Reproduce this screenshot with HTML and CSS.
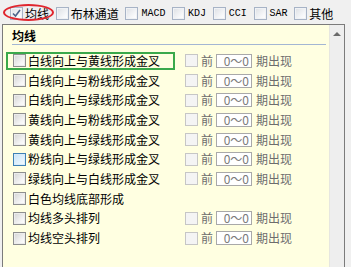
FILE: index.html
```html
<!DOCTYPE html>
<html>
<head>
    <meta charset="UTF-8">
    <title>均线</title>
    <link rel="stylesheet" href="styles.css">
</head>
<body>
    <!-- top toolbar -->
    <div class="toolbar">
        <span class="tab">
            <span class="cb cb-tool checked">
                <svg width="11" height="11" viewBox="0 0 11 11"><polyline points="2,5.5 4.5,8 9,2" fill="none" stroke="#4b6289" stroke-width="1.6"/></svg>
            </span>均线
        </span>
        <span class="tab"><span class="cb cb-tool"></span>布林通道</span>
        <span class="tab"><span class="cb cb-tool"></span><span class="latin">MACD</span></span>
        <span class="tab"><span class="cb cb-tool"></span><span class="latin">KDJ</span></span>
        <span class="tab"><span class="cb cb-tool"></span><span class="latin">CCI</span></span>
        <span class="tab"><span class="cb cb-tool"></span><span class="latin">SAR</span></span>
        <span class="tab"><span class="cb cb-tool"></span>其他</span>
        <span class="circle-mark"></span>
    </div>

    <div class="panel">
        <div class="pane">
            <div class="heading">均线</div>

            <div class="row first">
                <label class="opt marked"><span class="cb"></span>白线向上与黄线形成金叉</label>
                <div class="more"><span class="cb off"></span><span class="pre">前</span><span class="range">0～0</span><span class="post">期出现</span></div>
            </div>
            <div class="row">
                <label class="opt"><span class="cb"></span>白线向上与粉线形成金叉</label>
                <div class="more"><span class="cb off"></span><span class="pre">前</span><span class="range">0～0</span><span class="post">期出现</span></div>
            </div>
            <div class="row">
                <label class="opt"><span class="cb"></span>白线向上与绿线形成金叉</label>
                <div class="more"><span class="cb off"></span><span class="pre">前</span><span class="range">0～0</span><span class="post">期出现</span></div>
            </div>
            <div class="row">
                <label class="opt"><span class="cb"></span>黄线向上与粉线形成金叉</label>
                <div class="more"><span class="cb off"></span><span class="pre">前</span><span class="range">0～0</span><span class="post">期出现</span></div>
            </div>
            <div class="row">
                <label class="opt"><span class="cb"></span>黄线向上与绿线形成金叉</label>
                <div class="more"><span class="cb off"></span><span class="pre">前</span><span class="range">0～0</span><span class="post">期出现</span></div>
            </div>
            <div class="row">
                <label class="opt"><span class="cb hover"></span>粉线向上与绿线形成金叉</label>
                <div class="more"><span class="cb off"></span><span class="pre">前</span><span class="range">0～0</span><span class="post">期出现</span></div>
            </div>
            <div class="row">
                <label class="opt"><span class="cb"></span>绿线向上与白线形成金叉</label>
                <div class="more"><span class="cb off"></span><span class="pre">前</span><span class="range">0～0</span><span class="post">期出现</span></div>
            </div>
            <div class="row">
                <label class="opt"><span class="cb"></span>白色均线底部形成</label>
            </div>
            <div class="row">
                <label class="opt"><span class="cb"></span>均线多头排列</label>
                <div class="more"><span class="cb off"></span><span class="pre">前</span><span class="range">0～0</span><span class="post">期出现</span></div>
            </div>
            <div class="row">
                <label class="opt"><span class="cb"></span>均线空头排列</label>
                <div class="more"><span class="cb off"></span><span class="pre">前</span><span class="range">0～0</span><span class="post">期出现</span></div>
            </div>
        </div>
        <!-- vertical scrollbar -->
        <div class="scrollbar"><span class="arrow-up"></span></div>
    </div>
</body>
</html>
```

FILE: styles.css
```css
body {
    margin: 0;
    height: 267px;
    overflow: hidden;
    background-color: #f0f0f0;
    font-family: "Noto Sans CJK SC", sans-serif;
    font-size: 12px;
    color: #000;
}

/* toolbar */
.toolbar {
    position: relative;
    display: flex;
    align-items: center;
    box-sizing: border-box;
    height: 24px;
    padding: 3px 0 0 10px;
}

.tab {
    display: flex;
    align-items: center;
    gap: 2px;
    margin-right: 6.7px;
    line-height: 14px;
}

.latin {
    font-family: "Liberation Mono", monospace;
    font-size: 10px;
    padding-left: 1px;
}

/* red hand-drawn ring around the first tab */
.circle-mark {
    position: absolute;
    left: 3px;
    top: 4px;
    width: 51px;
    height: 17px;
    box-sizing: border-box;
    border: 2px solid #e0262e;
    border-radius: 50%;
}

/* checkboxes */
.cb {
    display: inline-flex;
    align-items: center;
    justify-content: center;
    flex: none;
    box-sizing: border-box;
    width: 13px;
    height: 13px;
    border: 1px solid #8d8e8e;
    background: linear-gradient(135deg, #d4d4d4, #f6f6f6 70%, #ffffff);
    box-shadow: inset 0 0 0 1px #ececec;
}

.cb-tool {
    border-color: #a7b3c6;
    background: linear-gradient(135deg, #dcdfe4, #f7f8fa 70%, #ffffff);
    box-shadow: inset 0 0 0 1px #f0f2f5;
}

.cb.hover {
    border-color: #3d80b4;
    background: linear-gradient(135deg, #c6e2f7, #e6f4fd 70%, #f4fbff);
    box-shadow: inset 0 0 0 1px #d8ecfa;
}

.cb.off {
    border-color: #c6c6c6;
    background: #f4f4f4;
    box-shadow: none;
}

/* main panel */
.panel {
    display: flex;
    box-sizing: border-box;
    width: 343px;
    height: 243px;
    margin-left: 2px;
    border: 1px solid #7b7b7b;
    border-bottom: none;
}

.pane {
    flex: 1;
    background-color: #ffffe1;
    border-right: 1px solid #e6e6e0;
}

.heading {
    margin: 0 3px 0 9px;
    padding-top: 3px;
    height: 16px;
    line-height: 16px;
    font-weight: bold;
    border-bottom: 1px solid #a3b6d3;
}

.row {
    display: flex;
    align-items: center;
    height: 19.7px;
}

.row.first {
    margin-top: 6px;
}

.opt {
    position: relative;
    display: flex;
    align-items: center;
    gap: 2px;
    box-sizing: border-box;
    width: 182px;
    height: 100%;
    padding-left: 10px;
    line-height: 14px;
}

/* green highlight frame on the first option */
.opt.marked::after {
    content: "";
    position: absolute;
    left: 3px;
    top: 1px;
    width: 169px;
    height: 18px;
    box-sizing: border-box;
    border: 2px solid #3aa94b;
}

.more {
    display: flex;
    align-items: center;
    color: #6d6d6d;
    line-height: 14px;
}

.pre {
    margin-left: 3px;
}

.range {
    box-sizing: border-box;
    width: 36px;
    height: 14px;
    margin-left: 3px;
    padding-right: 2px;
    border: 1px solid #a9a9a9;
    background-color: #fff;
    color: #7a7a7a;
    text-align: right;
    line-height: 12px;
}

.post {
    margin-left: 4px;
}

/* scrollbar */
.scrollbar {
    width: 14px;
    background-color: #eeeeee;
    display: flex;
    justify-content: center;
    padding-top: 7px;
    box-sizing: border-box;
}

.arrow-up {
    width: 0;
    height: 0;
    border-left: 4px solid transparent;
    border-right: 4px solid transparent;
    border-bottom: 4px solid #6a6a6a;
}
```
